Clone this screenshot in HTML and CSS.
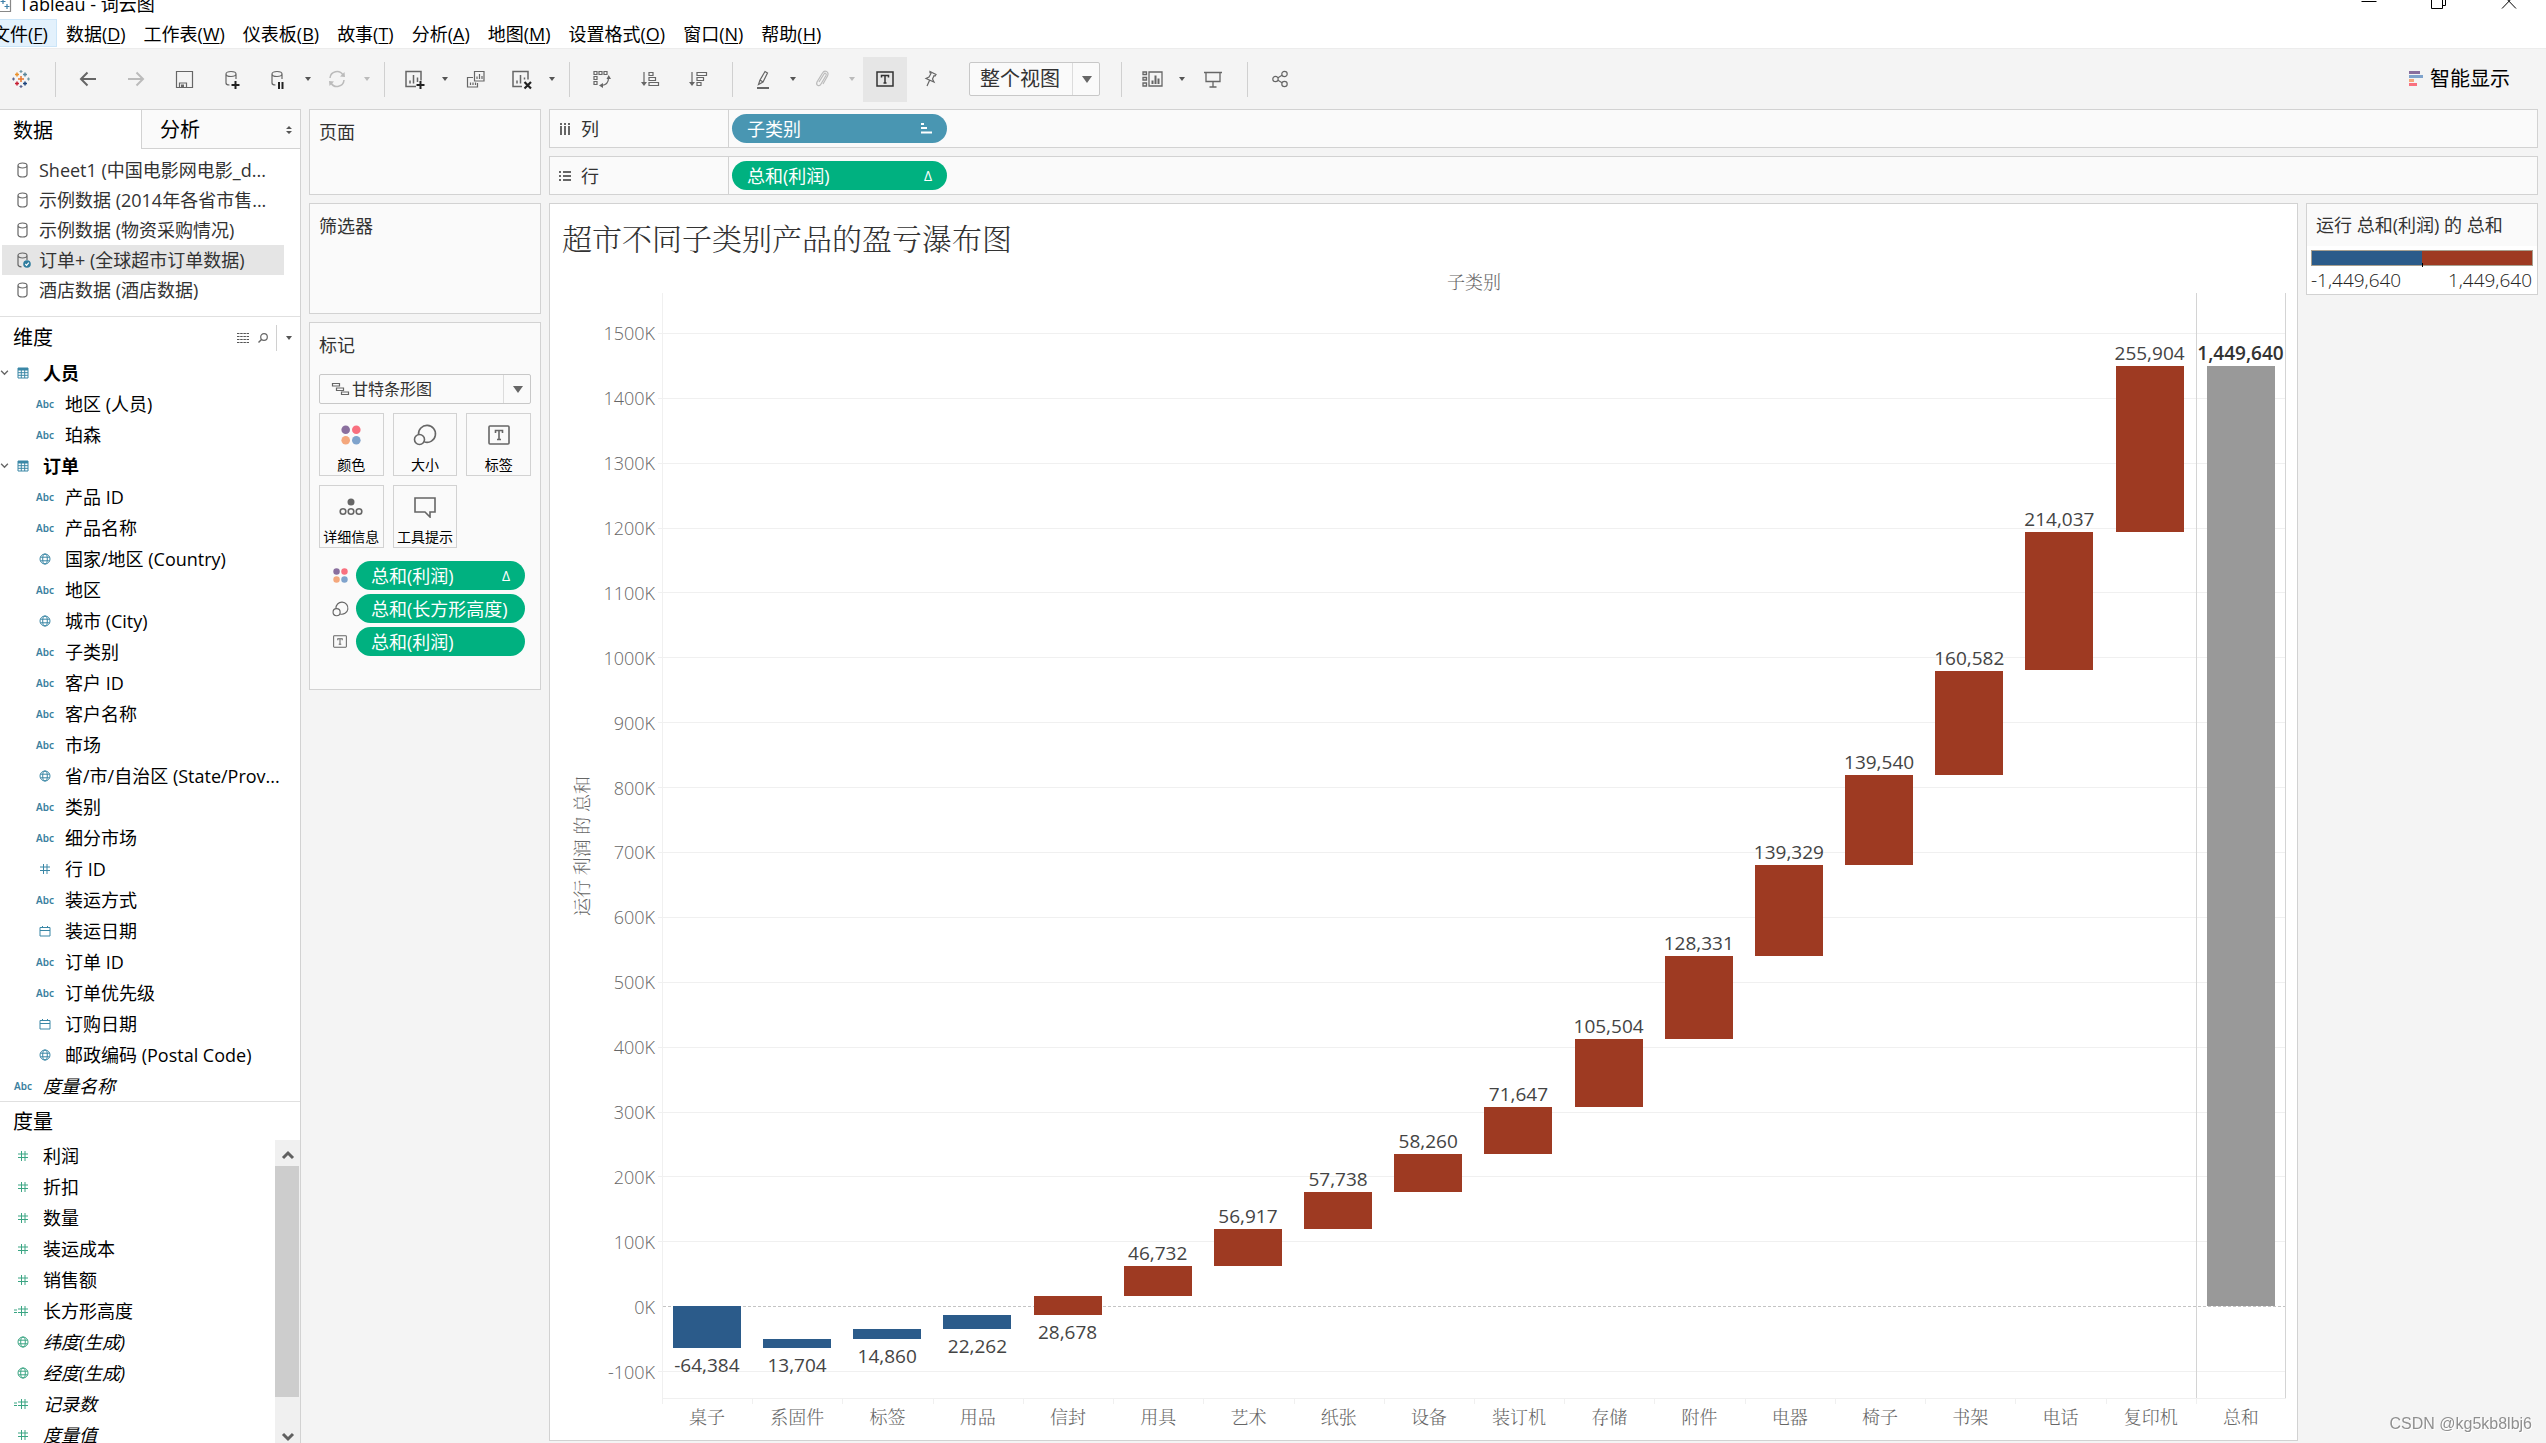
FILE: index.html
```html
<!DOCTYPE html>
<html lang="zh-CN">
<head>
<meta charset="utf-8">
<title>Tableau - 词云图</title>
<link rel="stylesheet" href="styles.css">
</head>
<body>
<svg class="sprite" aria-hidden="true">
  <symbol id="i-db" viewBox="0 0 12 16"><path d="M1 3.500v9c0 1.500 2 2.500 4.500 2.500s4.500-1 4.500-2.500v-9M1 3.500C1 2 3 1 5.500 1S10 2 10 3.500 8 6 5.500 6 1 5 1 3.500z"/></symbol>
  <symbol id="i-dbcheck" viewBox="0 0 14 16"><path d="M1 3.500v9c0 1.200 1.500 2.200 3.500 2.400M10 3.500V8M1 3.500C1 2 3 1 5.500 1S10 2 10 3.500 8 6 5.500 6 1 5 1 3.500z"/><circle cx="10" cy="12" r="3.800" fill="#2f7d9f" stroke="none"/><path d="M8.300 12l1.300 1.300 2.200-2.700" stroke="#fff"/></symbol>
  <symbol id="i-table" viewBox="0 0 12 12"><path d="M1 1h10v10H1zM1 3h10M1 5.700h10M1 8.300h10M4.300 3v8M7.700 3v8"/><path d="M1 2h10" stroke-width="2"/></symbol>
  <symbol id="i-globe" viewBox="0 0 12 12"><circle cx="6" cy="6" r="5"/><ellipse cx="6" cy="6" rx="2.300" ry="5"/><path d="M1.500 4.200h9M1.500 7.800h9"/></symbol>
  <symbol id="i-hash" viewBox="0 0 12 12"><path d="M4.500 1v10M8 1v10M1 4h10M1 7.500h10"/></symbol>
  <symbol id="i-calc" viewBox="0 0 16 12"><path d="M8.500 1v10M12 1v10M5 4h10M5 7.500h10M1 5h3M1 7.500h3"/></symbol>
  <symbol id="i-date" viewBox="0 0 12 12"><path d="M1 2.500h10v8.500H1zM1 5.500h10M3.500 1v1.500M8.500 1v1.500"/></symbol>
  <symbol id="i-chev" viewBox="0 0 8 8"><path d="M1 2.500l3 3 3-3"/></symbol>
  <symbol id="i-dots" viewBox="0 0 20 20"><g stroke="none"><circle cx="4.700" cy="4.700" r="4.300" fill="#8a6f9e"/><circle cx="15.300" cy="4.700" r="4.300" fill="#f9707f"/><circle cx="4.700" cy="15.300" r="4.300" fill="#f4a77c"/><circle cx="15.300" cy="15.300" r="4.300" fill="#7fa3cc"/></g></symbol>
  <symbol id="i-size" viewBox="0 0 24 22"><path d="M5.500 10.500A8.500 8.500 0 1 1 11.500 18"/><circle cx="6.500" cy="15.500" r="5"/></symbol>
  <symbol id="i-text" viewBox="0 0 22 20"><rect x="1" y="1" width="20" height="18" rx="1"/><path d="M7.500 8V5.500h7V8M11 5.500v9M9 14.500h4"/></symbol>
  <symbol id="i-detail" viewBox="0 0 24 18"><circle cx="12" cy="4" r="3.500" fill="#666" stroke="none"/><circle cx="4" cy="13.500" r="2.800"/><circle cx="12" cy="13.500" r="2.800"/><circle cx="20" cy="13.500" r="2.800"/></symbol>
  <symbol id="i-tip" viewBox="0 0 24 22"><path d="M2 2h20v14h-5v5l-5-5H2z"/></symbol>
</svg>

<header class="titlebar">
  <svg class="appicon" width="12" height="16" viewBox="0 0 12 16"><path d="M0 15.500h10.500V0" stroke="#888"/><path d="M3 3v5M.5 5.500h5M7 8v5M4.500 10.500h5" stroke="#3d7fa8"/></svg>
  <span class="caption">Tableau - 词云图</span>
  <div class="winctl">
    <button aria-label="最小化"><svg width="16" height="16"><path d="M.5 5.500h15"/></svg></button>
    <button aria-label="还原"><svg width="16" height="16"><path d="M.5 0v12.500h11V0M14.500 0v9.500h-3"/></svg></button>
    <button aria-label="关闭"><svg width="16" height="16"><path d="M1-2l14 14.500M15-2L1 12.500"/></svg></button>
  </div>
</header>

<nav class="menu">
  <button class="on">文件(<u>F</u>)</button><button>数据(<u>D</u>)</button><button>工作表(<u>W</u>)</button><button>仪表板(<u>B</u>)</button><button>故事(<u>T</u>)</button><button>分析(<u>A</u>)</button><button>地图(<u>M</u>)</button><button>设置格式(<u>O</u>)</button><button>窗口(<u>N</u>)</button><button>帮助(<u>H</u>)</button>
</nav>

<div class="toolbar">
  <button class="tool logo" aria-label="开始页面"><svg width="18" height="18" viewBox="0 0 18 18"><path d="M9 6v6M6 9h6" stroke="#e8762d" stroke-width="1.500"/><path d="M5 2.500v4M3 4.500h4" stroke="#eb912c" stroke-width="1.500"/><path d="M13 2.500v4M11 4.500h4" stroke="#5b879b" stroke-width="1.500"/><path d="M5 11.500v4M3 13.500h4" stroke="#c72035" stroke-width="1.500"/><path d="M13 11.500v4M11 13.500h4" stroke="#1f457e" stroke-width="1.500"/><path d="M9 0v3M7.500 1.500h3M16.500 7.500v3M15 9h3" stroke="#7199a6"/><path d="M9 15v3M7.500 16.500h3M1.500 7.500v3M0 9h3" stroke="#5c6692"/></svg></button>
  <i class="sep"></i>
  <button class="tool" aria-label="撤消"><svg width="18" height="16"><path d="M17 8H2M8.500 1.500L2 8l6.500 6.500" stroke-width="2"/></svg></button>
  <button class="tool dim" aria-label="重做"><svg width="18" height="16"><path d="M1 8h15M9.500 1.500L16 8l-6.500 6.500" stroke-width="2"/></svg></button>
  <button class="tool" aria-label="保存"><svg width="17" height="17"><path d="M.5.500h16v16H.5zM3.500 16.500v-4.500h7v4.500"/><path d="M5 13.500h3v3H5z" fill="#666" stroke="none"/></svg></button>
  <button class="tool" aria-label="新建数据源"><svg width="16" height="19"><path d="M2 4v9c0 1 1.500 2 3.500 2M12 4v5M2 4c0-1.500 2-2.500 5-2.500s5 1 5 2.500-2 2.500-5 2.500S2 5.500 2 4z"/><path d="M11.500 11v8M7.500 15h8" stroke="#222" stroke-width="2"/></svg></button>
  <button class="tool drop" aria-label="暂停自动更新"><svg width="16" height="19"><path d="M2 4v9c0 1 1.500 2 3.500 2M12 4v5M2 4c0-1.500 2-2.500 5-2.500s5 1 5 2.500-2 2.500-5 2.500S2 5.500 2 4z"/><path d="M9 12v7M12.500 12v7" stroke="#222" stroke-width="2"/></svg></button><button class="caret" aria-label="更多"></button>
  <button class="tool drop dim" aria-label="运行更新"><svg width="18" height="16"><path d="M2 7a7 7 0 0 1 13-3M16 9a7 7 0 0 1-13 3" stroke-width="1.500"/><path d="M12 5.500l5 .5-.5-5zM6 10.500L1 10l.5 5z" fill="#bbb" stroke="none"/></svg></button><button class="caret dim" aria-label="更多"></button>
  <i class="sep"></i>
  <button class="tool drop" aria-label="新建工作表"><svg width="20" height="19"><path d="M11 16.500H1V1.500h15v9M5 13.500v-3M8.500 13.500V5M12.500 12V7.500" stroke-width="1.500"/><path d="M15.500 11v8M11.500 15h8" stroke="#222" stroke-width="2"/></svg></button><button class="caret" aria-label="更多"></button>
  <button class="tool" aria-label="复制工作表"><svg width="18" height="17"><path d="M7.500.500h9.500v9.500h-9.500zM10 8V5.500M12.500 8V3M15 8V5M6 6.500H.5v9.500h10v-4M3.500 14v-2.500M6 14v-2.500M8.500 14v-2.500"/></svg></button>
  <button class="tool drop" aria-label="清除工作表"><svg width="20" height="19"><path d="M10 16.500H1V1.500h15v8M5 13.500v-3M8.500 13.500V5M12.500 9.500V7.500" stroke-width="1.500"/><path d="M12.500 12l6.500 6.500M19 12l-6.500 6.500" stroke="#222" stroke-width="2.200"/></svg></button><button class="caret" aria-label="更多"></button>
  <i class="sep"></i>
  <button class="tool" aria-label="交换行和列"><svg width="18" height="18"><path d="M1 1.500h3V4.500H1zM6 1.500H9V4.500H6zM11 1.500h3v3h-3zM1 6.500h3V9.500H1zM1 11.500h3v3H1zM15.500 8c0 4-2.500 7-7 7.500"/><path d="M15.700 5l2.300 4h-4.500zM6 15.500l4-2.500v5z" fill="#666" stroke="none"/></svg></button>
  <button class="tool" aria-label="升序排序"><svg width="19" height="16"><path d="M3 1v12M8 1.500H12v3H8zM8 6.500H14.500v3H8zM8 11.500H17.500V14.500H8z"/><path d="M0 11h6L3 15z" fill="#666" stroke="none"/></svg></button>
  <button class="tool" aria-label="降序排序"><svg width="19" height="16"><path d="M3 1v12M8 1.500H17.500v3H8zM8 6.500H14.500v3H8zM8 11.500H12V14.500H8z"/><path d="M0 11h6L3 15z" fill="#666" stroke="none"/></svg></button>
  <i class="sep"></i>
  <button class="tool drop" aria-label="突出显示"><svg width="14" height="19"><path d="M4 10L9 1.500l2.500 1.500L7 12l-4.500 2.500zM4 10l3 2"/><path d="M1 18h12" stroke-width="2"/></svg></button><button class="caret" aria-label="更多"></button>
  <button class="tool drop dim" aria-label="组成员"><svg width="14" height="18"><path d="M4 12l5-8c1-1.500 3-.5 2 1.500L6 14c-1.500 3-5.500 1.500-4-2L7.500 3c2-3.500 7-1.500 5 3L8 14"/></svg></button><button class="caret dim" aria-label="更多"></button>
  <button class="tool pressed" aria-label="显示标记标签"><svg width="18" height="17"><path d="M1 1h16v14H1zM5.500 6.500V4.500h7v2M9 4.500v7.500M7.500 12h3" stroke-width="1.500"/></svg></button>
  <button class="tool" aria-label="固定轴"><svg width="14" height="18"><path d="M6 1.500l6 3-1 1.500-1-.3L8.500 9l1.500 3-8-3.500 3-1.500 2-3.500-1-.8zM5.500 10.500L3 16"/></svg></button>
  <span class="picker fit"><select aria-label="适合"><option>整个视图</option></select></span>
  <i class="sep wide"></i>
  <button class="tool drop" aria-label="显示卡"><svg width="21" height="16"><path d="M7 1h13v14H7zM1 1h3.500v2.500H1zM1 6.500h3.500V9H1zM1 12h3.500v3H1z" stroke-width="1.300"/><path d="M10.500 13V9.500M13.500 13V4.500M16.500 13V7.500" stroke-width="2"/></svg></button><button class="caret" aria-label="更多"></button>
  <button class="tool" aria-label="演示模式"><svg width="18" height="17"><path d="M0 1.500h18M2 2v8.500h14V2M9 10.500V16M5.500 16h7" stroke-width="1.300"/></svg></button>
  <i class="sep"></i>
  <button class="tool" aria-label="共享"><svg width="16" height="18"><circle cx="12.500" cy="4" r="2.700"/><circle cx="3.500" cy="9" r="2.700"/><circle cx="12.500" cy="14" r="2.700"/><path d="M6 7.700L10 5.300M6 10.300l4 2.400"/></svg></button>
  <button class="showme"><svg width="14" height="16"><path d="M0 0h11v3H0z" fill="#8a6f9e"/><path d="M0 4h14v3H0z" fill="#7fa3cc"/><path d="M0 8h5v3H0z" fill="#f4a77c"/><path d="M0 12h8v3H0z" fill="#f9707f"/></svg>智能显示</button>
</div>

<main class="work">
  <aside class="side">
    <div class="tabs">
      <button class="tab on">数据</button>
      <button class="tab">分析<svg width="6" height="8"><path d="M0 3l3-3 3 3zM0 5l3 3 3-3z" fill="#555"/></svg></button>
    </div>
    <ul class="sources">
      <li><svg><use href="#i-db"/></svg>Sheet1 (中国电影网电影_d...</li>
      <li><svg><use href="#i-db"/></svg>示例数据 (2014年各省市售...</li>
      <li><svg><use href="#i-db"/></svg>示例数据 (物资采购情况)</li>
      <li class="on"><svg class="used"><use href="#i-dbcheck"/></svg>订单+ (全球超市订单数据)</li>
      <li><svg><use href="#i-db"/></svg>酒店数据 (酒店数据)</li>
    </ul>
    <section class="dims">
      <div class="head">
        <h2>维度</h2>
        <button aria-label="查看数据"><svg width="12" height="10"><path d="M0 .5h12M0 3.500h12M0 6.500h12M0 9.500h12" stroke="#555" stroke-dasharray="2.500 .7"/></svg></button>
        <button aria-label="查找字段"><svg width="10" height="10"><circle cx="6" cy="4" r="3.300"/><path d="M3.500 6.500L.5 9.500" stroke-width="1.500"/></svg></button>
        <button class="caret more" aria-label="更多"></button>
      </div>
      <ul class="fields">
        <li class="top bold"><svg class="chev"><use href="#i-chev"/></svg><span class="ic"><svg><use href="#i-table"/></svg></span>人员</li>
        <li><span class="ic">Abc</span>地区 (人员)</li>
        <li><span class="ic">Abc</span>珀森</li>
        <li class="top bold"><svg class="chev"><use href="#i-chev"/></svg><span class="ic"><svg><use href="#i-table"/></svg></span>订单</li>
        <li><span class="ic">Abc</span>产品 ID</li>
        <li><span class="ic">Abc</span>产品名称</li>
        <li><span class="ic"><svg><use href="#i-globe"/></svg></span>国家/地区 (Country)</li>
        <li><span class="ic">Abc</span>地区</li>
        <li><span class="ic"><svg><use href="#i-globe"/></svg></span>城市 (City)</li>
        <li><span class="ic">Abc</span>子类别</li>
        <li><span class="ic">Abc</span>客户 ID</li>
        <li><span class="ic">Abc</span>客户名称</li>
        <li><span class="ic">Abc</span>市场</li>
        <li><span class="ic"><svg><use href="#i-globe"/></svg></span>省/市/自治区 (State/Prov...</li>
        <li><span class="ic">Abc</span>类别</li>
        <li><span class="ic">Abc</span>细分市场</li>
        <li><span class="ic"><svg><use href="#i-hash"/></svg></span>行 ID</li>
        <li><span class="ic">Abc</span>装运方式</li>
        <li><span class="ic"><svg><use href="#i-date"/></svg></span>装运日期</li>
        <li><span class="ic">Abc</span>订单 ID</li>
        <li><span class="ic">Abc</span>订单优先级</li>
        <li><span class="ic"><svg><use href="#i-date"/></svg></span>订购日期</li>
        <li><span class="ic"><svg><use href="#i-globe"/></svg></span>邮政编码 (Postal Code)</li>
        <li class="top gen"><span class="ic">Abc</span>度量名称</li>
      </ul>
    </section>
    <section class="measures">
      <div class="head"><h2>度量</h2></div>
      <div class="scroller">
        <ul class="fields green">
          <li class="top"><span class="ic"><svg><use href="#i-hash"/></svg></span>利润</li>
          <li class="top"><span class="ic"><svg><use href="#i-hash"/></svg></span>折扣</li>
          <li class="top"><span class="ic"><svg><use href="#i-hash"/></svg></span>数量</li>
          <li class="top"><span class="ic"><svg><use href="#i-hash"/></svg></span>装运成本</li>
          <li class="top"><span class="ic"><svg><use href="#i-hash"/></svg></span>销售额</li>
          <li class="top"><span class="ic calc"><svg><use href="#i-calc"/></svg></span>长方形高度</li>
          <li class="top gen"><span class="ic"><svg><use href="#i-globe"/></svg></span>纬度(生成)</li>
          <li class="top gen"><span class="ic"><svg><use href="#i-globe"/></svg></span>经度(生成)</li>
          <li class="top gen"><span class="ic calc"><svg><use href="#i-calc"/></svg></span>记录数</li>
          <li class="top gen"><span class="ic"><svg><use href="#i-hash"/></svg></span>度量值</li>
        </ul>
        <div class="bar-v">
          <button aria-label="向上滚动"><svg width="12" height="10"><path d="M1 8l5-5 5 5" stroke-width="3"/></svg></button>
          <div class="track"><div class="thumb"></div></div>
          <button class="down" aria-label="向下滚动"><svg width="12" height="10"><path d="M1 4l5 5 5-5" stroke-width="3"/></svg></button>
        </div>
      </div>
    </section>
  </aside>

  <div class="cards">
    <section class="card pages"><h3>页面</h3></section>
    <section class="card filters"><h3>筛选器</h3></section>
    <section class="card marks">
      <h3>标记</h3>
      <span class="picker mark"><svg width="17" height="12"><path d="M.5.500h7v2.500h-7zM4.500 5h7v2.500h-7zM9.500 9h7v2.500h-7z"/></svg><select aria-label="标记类型"><option>甘特条形图</option></select></span>
      <div class="props">
        <button><svg width="20" height="20"><use href="#i-dots"/></svg>颜色</button>
        <button><svg width="24" height="22"><use href="#i-size"/></svg>大小</button>
        <button><svg width="22" height="20"><use href="#i-text"/></svg>标签</button>
        <button><svg width="24" height="18"><use href="#i-detail"/></svg>详细信息</button>
        <button><svg width="24" height="22"><use href="#i-tip"/></svg>工具提示</button>
      </div>
      <div class="encs">
        <svg width="15" height="15"><use href="#i-dots"/></svg><button class="pill">总和(利润)<span class="delta">Δ</span></button>
        <svg width="17" height="16"><use href="#i-size"/></svg><button class="pill">总和(长方形高度)</button>
        <svg width="14" height="13"><use href="#i-text"/></svg><button class="pill">总和(利润)</button>
      </div>
    </section>
  </div>

  <div class="sheet">
    <div class="shelf"><div class="name"><svg width="12" height="12"><path d="M2 0v2M6 0v2M10 0v2M2 3v9M6 3v9M10 3v9" stroke-width="2"/></svg>列</div><button class="pill blue">子类别<svg width="11" height="11"><path d="M0 1h3M0 5h6M0 9.500h11" stroke="#fff" stroke-width="2"/></svg></button></div>
    <div class="shelf"><div class="name"><svg width="12" height="12"><path d="M0 2h2M0 6h2M0 10h2M4 2h8M4 6h8M4 10h8" stroke-width="2"/></svg>行</div><button class="pill">总和(利润)<span class="delta">Δ</span></button></div>
    <div class="canvas">
      <section class="view">
        <h1>超市不同子类别产品的盈亏瀑布图</h1>
        <div class="chart">
          <div class="xtitle">子类别</div>
          <div class="ytitle"><span>运行 利润 的 总和</span></div>
          <div class="yaxis">
            <span style="--v:1500">1500K</span><span style="--v:1400">1400K</span><span style="--v:1300">1300K</span><span style="--v:1200">1200K</span><span style="--v:1100">1100K</span><span style="--v:1000">1000K</span><span style="--v:900">900K</span><span style="--v:800">800K</span><span style="--v:700">700K</span><span style="--v:600">600K</span><span style="--v:500">500K</span><span style="--v:400">400K</span><span style="--v:300">300K</span><span style="--v:200">200K</span><span style="--v:100">100K</span><span style="--v:0">0K</span><span style="--v:-100">-100K</span>
          </div>
          <div class="plot">
            <i style="--v:1500"></i><i style="--v:1400"></i><i style="--v:1300"></i><i style="--v:1200"></i><i style="--v:1100"></i><i style="--v:1000"></i><i style="--v:900"></i><i style="--v:800"></i><i style="--v:700"></i><i style="--v:600"></i><i style="--v:500"></i><i style="--v:400"></i><i style="--v:300"></i><i style="--v:200"></i><i style="--v:100"></i><i class="zero" style="--v:0"></i><i style="--v:-100"></i>
            <div class="col"><div class="bar neg" style="--hi:0;--lo:-64.384"><b>-64,384</b></div></div>
            <div class="col"><div class="bar neg" style="--hi:-50.680;--lo:-64.384"><b>13,704</b></div></div>
            <div class="col"><div class="bar neg" style="--hi:-35.820;--lo:-50.680"><b>14,860</b></div></div>
            <div class="col"><div class="bar neg" style="--hi:-13.558;--lo:-35.820"><b>22,262</b></div></div>
            <div class="col"><div class="bar under" style="--hi:15.120;--lo:-13.558"><b>28,678</b></div></div>
            <div class="col"><div class="bar" style="--hi:61.852;--lo:15.120"><b>46,732</b></div></div>
            <div class="col"><div class="bar" style="--hi:118.769;--lo:61.852"><b>56,917</b></div></div>
            <div class="col"><div class="bar" style="--hi:176.507;--lo:118.769"><b>57,738</b></div></div>
            <div class="col"><div class="bar" style="--hi:234.767;--lo:176.507"><b>58,260</b></div></div>
            <div class="col"><div class="bar" style="--hi:306.414;--lo:234.767"><b>71,647</b></div></div>
            <div class="col"><div class="bar" style="--hi:411.918;--lo:306.414"><b>105,504</b></div></div>
            <div class="col"><div class="bar" style="--hi:540.249;--lo:411.918"><b>128,331</b></div></div>
            <div class="col"><div class="bar" style="--hi:679.578;--lo:540.249"><b>139,329</b></div></div>
            <div class="col"><div class="bar" style="--hi:819.118;--lo:679.578"><b>139,540</b></div></div>
            <div class="col"><div class="bar" style="--hi:979.700;--lo:819.118"><b>160,582</b></div></div>
            <div class="col"><div class="bar" style="--hi:1193.737;--lo:979.700"><b>214,037</b></div></div>
            <div class="col"><div class="bar" style="--hi:1449.640;--lo:1193.737"><b>255,904</b></div></div>
            <div class="col total"><div class="bar sum" style="--hi:1449.640;--lo:0"><b>1,449,640</b></div></div>
          </div>
          <div class="xaxis"><span>桌子</span><span>系固件</span><span>标签</span><span>用品</span><span>信封</span><span>用具</span><span>艺术</span><span>纸张</span><span>设备</span><span>装订机</span><span>存储</span><span>附件</span><span>电器</span><span>椅子</span><span>书架</span><span>电话</span><span>复印机</span><span>总和</span></div>
        </div>
      </section>
      <aside class="legend">
        <h3>运行 总和(利润) 的 总和</h3>
        <div class="ramp"></div>
        <div class="ends"><span>-1,449,640</span><span>1,449,640</span></div>
      </aside>
    </div>
  </div>
</main>
<div class="watermark">CSDN @kg5kb8lbj6</div>
</body>
</html>
```
FILE: styles.css
```css
* { box-sizing: border-box; margin: 0; padding: 0; }
html, body { height: 100%; overflow: hidden; }
body {
  display: flex; flex-direction: column;
  background: #f4f4f4; color: #000;
  font: 18px/24px "Open Sans", "Noto Sans CJK SC", sans-serif;
  white-space: nowrap;
}
button { border: 0; background: none; font: inherit; color: inherit; white-space: nowrap; }
svg { fill: none; stroke: #666; stroke-width: 1.2; flex: none; overflow: visible; }
ul { list-style: none; }
h1, h2, h3 { font-weight: 400; }
.sprite { position: absolute; width: 0; height: 0; }

/* window frame */
.titlebar { background: #fff; height: 19px; padding-bottom: 11px; display: flex; align-items: center; }
.appicon { margin-right: 7px; }
.winctl { margin-left: auto; margin-right: 2px; display: flex; }
.winctl button { width: 70px; height: 16px; display: flex; justify-content: center; }
.winctl svg { stroke: #000; stroke-width: 1; }
.menu { background: #fff; height: 30px; border-bottom: 1px solid #ececec; display: flex; align-items: flex-start; }
.menu button { height: 28px; padding: 2px 9px 0; }
.menu .on { background: #e3f1fc; box-shadow: inset 0 0 0 1px #cbe5f8; margin-left: -17px; }
.menu u { text-underline-offset: 2px; }

/* toolbar */
.toolbar { height: 60px; display: flex; align-items: center; }
.tool { width: 48px; height: 45px; display: flex; align-items: center; justify-content: center; flex: none; }
.tool.logo { width: 41px; }
.tool.logo + .sep { margin-left: 14px; }
.tool.drop { width: 44px; }
.tool.dim svg { stroke: #bbb; }
.tool.pressed { width: 44px; margin-left: 4px; background: #e6e6e6; }
.tool.pressed svg { stroke: #333; }
.caret { width: 15px; height: 24px; display: flex; align-items: center; justify-content: center; flex: none; }
.caret::before { content: ""; border: 3px solid transparent; border-top: 4px solid #555; border-bottom: 0; }
.caret.dim::before { border-top-color: #bbb; }
.sep { width: 1px; height: 35px; background: #d0d0d0; margin: 0 8px 0 10px; flex: none; }
.sep.wide { margin-left: 21px; }
.picker { display: flex; align-items: center; position: relative; border: 1px solid #c8c8c8; border-radius: 2px; background: #fafafa; color: #333; }
.picker select { flex: 1; min-width: 0; align-self: stretch; appearance: none; border: 0; background: none; font: inherit; color: inherit; }
.picker::after { content: ""; position: absolute; right: 7px; top: 50%; margin-top: -3px; border: 5px solid transparent; border-top: 7px solid #666; border-bottom: 0; pointer-events: none; }
.picker::before { content: ""; position: absolute; right: 26px; top: 0; bottom: 0; border-left: 1px solid #dcdcdc; }
.fit { width: 131px; height: 34px; margin-left: 14px; font-size: 20px; }
.fit select { padding-left: 10px; }
.showme { margin-left: auto; margin-right: 36px; display: flex; align-items: center; gap: 7px; font-size: 20px; }
.showme svg { stroke: none; }

.work { flex: 1; min-height: 0; display: grid; grid-template-columns: 301px 232px 1fr; gap: 8px; padding-right: 8px; }

/* data pane */
.side { background: #fff; border: solid #d2d2d2; border-width: 1px 1px 0 0; display: flex; flex-direction: column; min-height: 0; }
.tabs { display: flex; height: 39px; font-size: 20px; }
.tab { flex: 1; display: flex; align-items: center; justify-content: space-between; text-align: left; padding: 2px 8px 0 18px; background: #fafafa; border: solid #d2d2d2; border-width: 0 0 1px 1px; }
.tab.on { flex: none; width: 141px; background: #fff; border: 0; padding-left: 13px; }
.tab svg { stroke: none; }
.sources { padding: 6px 16px 0 2px; height: 168px; border-bottom: 1px solid #e0e0e0; color: #333; }
.sources li { height: 30px; display: flex; align-items: center; padding-left: 15px; }
.sources svg { width: 12px; height: 16px; margin-right: 10px; }
.sources .used { width: 14px; margin-right: 8px; }
.sources .on { background: #e5e5e5; }
.head { display: flex; align-items: center; height: 40px; padding: 2px 0 0 13px; }
.head h2 { font-size: 20px; flex: 1; }
.head button { height: 26px; width: 20px; display: flex; align-items: center; justify-content: center; }
.head .more { width: 24px; border-left: 1px solid #d0d0d0; margin-left: 3px; }
.fields li { height: 31px; display: flex; align-items: center; padding-left: 31px; }
.fields .top { padding-left: 9px; }
.fields .bold { font-weight: 700; padding-left: 0; }
.fields .gen { font-style: italic; }
.chev { width: 9px; height: 9px; }
.ic { width: 28px; margin-right: 6px; display: flex; justify-content: center; flex: none; color: #3a7f9e; font: 600 10px/12px "Noto Sans", sans-serif; }
.ic svg { width: 12px; height: 12px; stroke: #3a87a6; stroke-width: 1; }
.calc { justify-content: flex-end; padding-right: 8px; }
.calc svg { width: 16px; }
.green .ic svg { stroke: #3aa583; }
.measures { flex: 1; min-height: 0; display: flex; flex-direction: column; border-top: 1px solid #e0e0e0; }
.measures .head { height: 38px; }
.scroller { flex: 1; min-height: 0; display: flex; overflow: hidden; }
.scroller .fields { flex: 1; }
.bar-v { width: 25px; background: #f0f0f0; display: flex; flex-direction: column; }
.bar-v button { height: 26px; display: flex; align-items: center; justify-content: center; flex: none; padding-top: 4px; }
.bar-v button.down { height: 20px; }
.bar-v svg { stroke: #606060; }
.track { flex: 1; }
.thumb { height: 90%; margin-right: 1px; background: #cdcdcd; }

/* shelf cards */
.cards { display: flex; flex-direction: column; gap: 8px; }
.card, .shelf { background: #fafafa; border: 1px solid #d2d2d2; }
.card { padding: 10px 9px; color: #333; }
.card h3 { font-size: 18px; }
.pages { height: 86px; }
.filters { height: 111px; }
.marks { height: 368px; }
.mark { height: 30px; margin-top: 17px; padding-left: 12px; font-size: 16px; }
.mark select { padding-left: 3px; }
.props { display: grid; grid-template-columns: repeat(3, 1fr); gap: 9px; margin-top: 9px; }
.props button { height: 63px; border: 1px solid #d2d2d2; display: grid; grid-template-rows: 1fr 18px; place-items: center; font-size: 14px; line-height: 18px; color: #000; padding: 0 0 1px; min-width: 0; }
.props svg { stroke-width: 1.6; }
.encs { display: grid; grid-template-columns: 37px 169px; row-gap: 4px; margin-top: 13px; align-items: center; }
.encs > svg { justify-self: center; margin-left: 5px; stroke-width: 1.6; }
.pill { height: 29px; border-radius: 15px; background: #00b180; color: #fff; display: flex; align-items: center; justify-content: space-between; padding: 0 15px; }
.pill.blue { background: #4996b2; }
.delta { font-size: 14px; }

.sheet { display: flex; flex-direction: column; gap: 8px; min-width: 0; min-height: 0; padding-bottom: 2px; }
.shelf { height: 39px; display: flex; align-items: center; color: #333; }
.shelf .name { width: 179px; align-self: stretch; border-right: 1px solid #d2d2d2; display: flex; align-items: center; gap: 10px; padding-left: 9px; }
.shelf .pill { width: 215px; margin-left: 3px; }
.canvas { flex: 1; min-height: 0; display: grid; grid-template-columns: 1fr 232px; gap: 8px; align-items: start; }
.view { height: 100%; background: #fff; border: 1px solid #d2d2d2; display: flex; flex-direction: column; }
.view h1 { font: 300 30px/40px "Noto Serif CJK SC", "Noto Sans CJK SC", serif; color: #333; padding: 13px 0 15px 12px; }

/* waterfall chart: the value scale runs from -141.5K to 1561.5K */
.chart { flex: 1; min-height: 0; display: grid; grid-template: 21px 1fr 41px / 64px 48px 1fr; padding-right: 11px; color: #666; }
.xtitle, .ytitle, .xaxis { font-family: "Noto Serif CJK SC", "Noto Sans CJK SC", serif; font-weight: 300; }
.xtitle { grid-column: 3; text-align: center; line-height: 19px; }
.ytitle { grid-area: 2 / 1; display: flex; align-items: center; justify-content: center; padding-right: 2px; }
.ytitle span { writing-mode: vertical-rl; text-orientation: sideways; transform: rotate(180deg); }
.yaxis { grid-area: 2 / 2; position: relative; font-family: "Open Sans", sans-serif; font-weight: 300; }
.yaxis span { position: absolute; right: 7px; top: calc((1561.5 - var(--v)) / 1703 * 100%); margin-top: -12px; }
.plot { grid-area: 2 / 3; position: relative; display: grid; grid-template-columns: repeat(18, 1fr); border: solid #f0f0f0; border-width: 0 0 1px 1px; }
.plot > i { position: absolute; left: -5px; right: 0; top: calc((1561.5 - var(--v)) / 1703 * 100%); border-top: 1px solid #f0f0f0; }
.plot > .zero { left: 0; border-top: 1px dashed #c4c4c4; }
.col { position: relative; }
.total { border: solid #d4d4d4; border-width: 0 1px; }
.bar { position: absolute; left: 11%; width: 68px; background: #9e3a22; top: calc((1561.5 - var(--hi)) / 1703 * 100%); height: calc((var(--hi) - var(--lo)) / 1703 * 100%); display: flex; justify-content: center; }
.bar b { position: absolute; bottom: 100%; font: 400 19px/26px "Open Sans", sans-serif; color: #444; }
.bar.neg { background: #2b5b8a; }
.neg b, .under b { bottom: auto; top: 100%; padding-top: 4px; }
.bar.sum { background: #999; }
.bar.sum b { font-weight: 600; color: #333; }
.xaxis { grid-area: 3 / 3; display: grid; grid-template-columns: repeat(18, 1fr); line-height: 34px; text-align: center; }
.xaxis span { background: linear-gradient(#f0f0f0, #f0f0f0) 0 0 / 1px 5px no-repeat; }

.legend { background: #fff; border: 1px solid #d2d2d2; height: 92px; }
.legend h3 { font-size: 18px; line-height: 42px; padding-left: 9px; background: #fafafa; color: #333; }
.ramp { height: 16px; margin: 4px 4px 1px; border: 1px solid #a8a090; background: linear-gradient(90deg, #2b5b8a 50%, #9e3a22 50%); position: relative; }
.ramp::after { content: ""; position: absolute; left: 50%; bottom: -2px; width: 1px; height: 4px; background: #000; }
.ends { display: flex; justify-content: space-between; padding: 0 5px 0 4px; font: 300 19px/26px "Open Sans", sans-serif; color: #222; }

.watermark { position: fixed; right: 14px; bottom: 8px; font: 16px/22px "Liberation Sans", sans-serif; color: #8f8f8f; text-shadow: 1px 1px 0 #fff; }
```
